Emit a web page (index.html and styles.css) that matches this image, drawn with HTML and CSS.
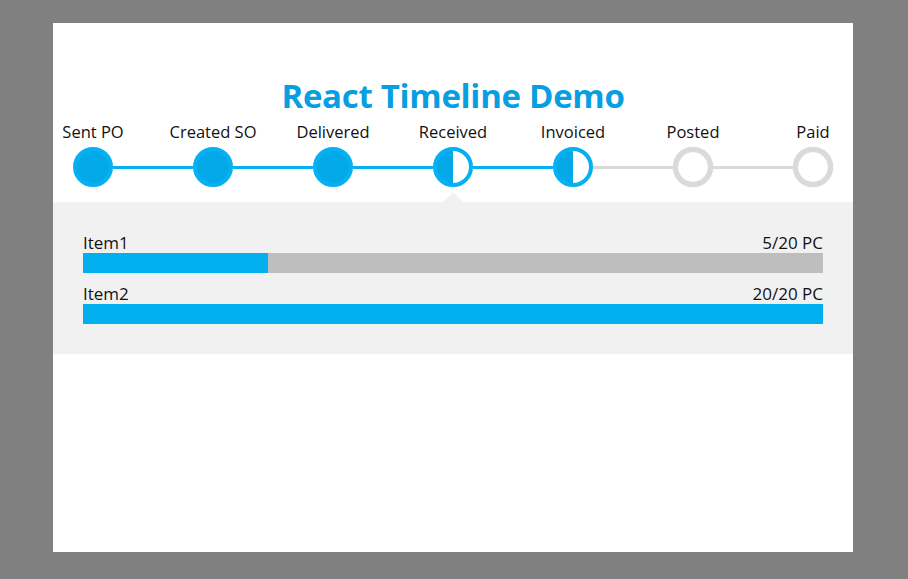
FILE: index.html
```html
<!DOCTYPE html>
<html>
<head>
<meta charset="utf-8">
<link rel="stylesheet" href="styles.css">
</head>
<body>
<div class="card">
  <h1 class="title">React Timeline Demo</h1>
  <div class="timeline">
    <div class="step"><span class="label">Sent PO</span><span class="dot done"></span></div>
    <div class="conn active"></div>
    <div class="step"><span class="label">Created SO</span><span class="dot done"></span></div>
    <div class="conn active"></div>
    <div class="step"><span class="label">Delivered</span><span class="dot done"></span></div>
    <div class="conn active"></div>
    <div class="step"><span class="label">Received</span><span class="dot half"></span></div>
    <div class="conn active"></div>
    <div class="step"><span class="label">Invoiced</span><span class="dot half"></span></div>
    <div class="conn"></div>
    <div class="step"><span class="label">Posted</span><span class="dot todo"></span></div>
    <div class="conn"></div>
    <div class="step"><span class="label">Paid</span><span class="dot todo"></span></div>
  </div>
  <div class="details">
    <div class="item">
      <div class="item-head"><span>Item1</span><span>5/20 PC</span></div>
      <div class="bar"><div class="fill" style="width:25%"></div></div>
    </div>
    <div class="item">
      <div class="item-head"><span>Item2</span><span>20/20 PC</span></div>
      <div class="bar"><div class="fill" style="width:100%"></div></div>
    </div>
  </div>
</div>
</body>
</html>
```
FILE: styles.css
```css
html, body {
  margin: 0;
  padding: 0;
  background: #808080;
  height: 100%;
}
body {
  padding: 23px 0 0 53px;
  box-sizing: border-box;
  font-family: "Open Sans", "Noto Sans", sans-serif;
}
.card {
  width: 800px;
  height: 529px;
  background: #fff;
  box-sizing: border-box;
  padding-top: 55px;
}
.title {
  margin: 0;
  text-align: center;
  font-size: 33px;
  line-height: 36px;
  font-weight: 700;
  color: #079fe1;
  letter-spacing: -0.3px;
}
.timeline {
  display: flex;
  align-items: flex-end;
  padding: 0 20px;
  margin-top: 7px;
}
.step {
  width: 40px;
  display: flex;
  flex-direction: column;
  align-items: center;
  flex: none;
}
.label {
  white-space: nowrap;
  font-size: 16.5px;
  line-height: 22px;
  color: #111;
  margin-bottom: 4px;
}
.dot {
  width: 40px;
  height: 40px;
  border-radius: 50%;
  box-sizing: border-box;
  display: block;
}
.dot.done {
  background: #03a8e8;
  border: 4px solid #06b1f1;
}
.dot.half {
  border: 4px solid #06b1f1;
  background: linear-gradient(to right, #03a8e8 50%, #fff 50%);
}
.dot.todo {
  border: 5px solid #dadada;
  background: #fff;
  box-shadow: 0 0 1px #d0d0d0, inset 0 0 1px #d0d0d0;
}
.conn {
  flex: 1;
  height: 3px;
  margin-bottom: 18px;
  background: #dadada;
}
.conn.active {
  background: #06b1f1;
}
.details {
  position: relative;
  margin-top: 15px;
  background: #f1f1f1;
  padding: 30px;
  display: flex;
  flex-direction: column;
  gap: 10px;
}
.details::before {
  content: "";
  position: absolute;
  top: -10px;
  left: 390px;
  border-left: 10px solid transparent;
  border-right: 10px solid transparent;
  border-bottom: 10px solid #f1f1f1;
}
.item-head {
  display: flex;
  justify-content: space-between;
  font-size: 17px;
  line-height: 21px;
  color: #111;
}
.bar {
  height: 20px;
  background: #bebebe;
}
.fill {
  height: 100%;
  background: #03b0ef;
}
```
